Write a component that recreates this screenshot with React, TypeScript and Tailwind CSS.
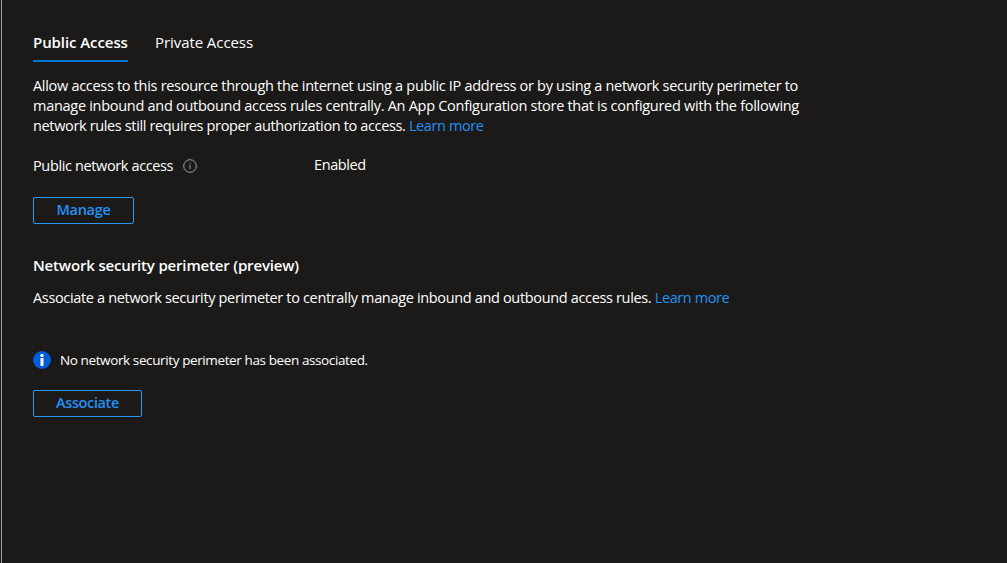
import type { ReactNode } from "react";

function TextLink({ children }: { children: ReactNode }) {
  return (
    <a href="#" className="tracking-[-0.4px] text-[#2490f5]">
      {children}
    </a>
  );
}

function ActionButton({ children, className }: { children: ReactNode; className: string }) {
  return (
    <button
      type="button"
      className={`flex h-[27px] items-center justify-center rounded-[2px] border border-[#2899f5] pb-px text-[14.5px] font-semibold text-[#2490f5] ${className}`}
    >
      {children}
    </button>
  );
}

function InfoOutlineIcon() {
  return (
    <svg aria-hidden width="14" height="14" viewBox="0 0 14 14" fill="none">
      <circle cx="7" cy="7" r="6.3" stroke="#a19f9d" strokeWidth="1" />
      <path d="M7 6v4.2M7 3.8v1.1" stroke="#a19f9d" strokeWidth="1" />
    </svg>
  );
}

function InfoBadgeIcon() {
  return (
    <svg aria-hidden width="18" height="18" viewBox="0 0 18 18">
      <circle cx="9" cy="9" r="9" fill="#015cda" />
      <rect x="7.5" y="7" width="3" height="8" rx="0.4" fill="#fff" />
      <circle cx="9" cy="4.5" r="1.7" fill="#fff" />
    </svg>
  );
}

export default function App() {
  return (
    <div className="flex h-[563px] w-[1007px] overflow-hidden bg-[#1b1a19] pl-px font-['Open_Sans','Noto_Sans',sans-serif] text-[14.5px] leading-5 whitespace-nowrap text-white">
      <div className="w-px shrink-0 bg-[#a19f9d]" />
      <main className="flex flex-1 flex-col items-start pt-8 pl-[31px]">
        <nav className="flex gap-[27px] text-[15px]">
          <a href="#" className="w-[95px] border-b-2 border-[#0078d4] pb-2 font-semibold tracking-[-0.08px]">
            Public Access
          </a>
          <a href="#" className="tracking-[-0.07px]">
            Private Access
          </a>
        </nav>

        <p className="mt-[14px]">
          <span className="block tracking-[-0.3px]">
            Allow access to this resource through the internet using a public IP address or by using a network security perimeter to
          </span>
          <span className="block tracking-[-0.283px]">
            manage inbound and outbound access rules centrally. An App Configuration store that is configured with the following
          </span>
          <span className="block tracking-[-0.355px]">
            network rules still requires proper authorization to access. <TextLink>Learn more</TextLink>
          </span>
        </p>

        <div className="mt-[19px] flex items-start">
          <div className="flex w-[281px] items-center pt-px">
            <span className="w-[150px] tracking-[-0.37px]">Public network access</span>
            <InfoOutlineIcon />
          </div>
          <span className="tracking-[-0.4px]">Enabled</span>
        </div>

        <ActionButton className="mt-[21px] w-[101px] tracking-[-0.27px]">Manage</ActionButton>

        <h2 className="mt-[31px] text-[15px] font-semibold tracking-[-0.16px]">Network security perimeter (preview)</h2>
        <p className="mt-[13px] tracking-[-0.34px]">
          Associate a network security perimeter to centrally manage inbound and outbound access rules. <TextLink>Learn more</TextLink>
        </p>

        <div className="mt-[42px] flex items-center gap-[9px]">
          <InfoBadgeIcon />
          <span className="text-[13.5px] tracking-[-0.39px]">No network security perimeter has been associated.</span>
        </div>

        <ActionButton className="mt-5 w-[109px] tracking-[-0.38px]">Associate</ActionButton>
      </main>
    </div>
  );
}
